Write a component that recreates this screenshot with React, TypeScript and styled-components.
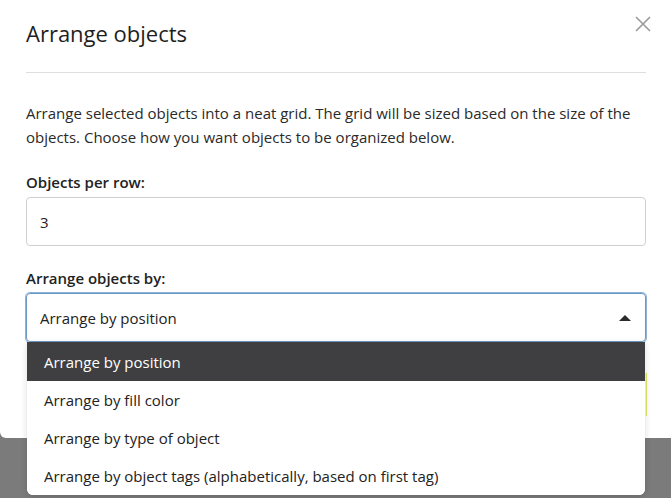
import React from 'react'
import styled, { createGlobalStyle } from 'styled-components'

const Global = createGlobalStyle`
    html, body {
        margin: 0;
        padding: 0;
        background: #7b7b7b;
    }
    body {
        font-family: "Open Sans", "Liberation Sans", sans-serif;
        color: #212529;
    }
`

const Page = styled.div`
    width: 671px;
    height: 498px;
    overflow: hidden;
    background: #7b7b7b;
`

const Modal = styled.div`
    position: relative;
    width: 700px;
    background: #fff;
    border-radius: 0 0 6px 6px;
    padding: 0 0 0 26px;
    box-sizing: border-box;
`

const Inner = styled.div`
    width: 620px;
`

const Header = styled.div`
    display: flex;
    justify-content: space-between;
    align-items: flex-start;
    height: 72px;
    border-bottom: 1px solid #dedede;
`

const Title = styled.h1`
    margin: 19px 0 0;
    font-size: 22px;
    font-weight: 400;
    line-height: 28px;
    color: #1e1e1e;
`

const Close = styled.button`
    margin: 15px -6px 0 0;
    padding: 0;
    border: none;
    background: none;
    width: 18px;
    height: 18px;
    display: flex;
`

const Body = styled.div`
    padding-top: 28px;
`

const Text = styled.p`
    margin: 0 0 21px;
    font-size: 15px;
    line-height: 24px;
    color: #2a2a2a;
`

const Label = styled.div`
    font-size: 15px;
    font-weight: 600;
    line-height: 24px;
    margin-bottom: 3px;
    color: #222;
`

const Field = styled.div<{ $focus?: boolean }>`
    position: relative;
    height: 49px;
    box-sizing: border-box;
    border: 1px solid ${p => (p.$focus ? '#6a98c4' : '#cfcfcf')};
    ${p => p.$focus && 'box-shadow: 0 0 0 1px #8fb3d6;'}
    border-radius: 4px;
    display: flex;
    align-items: center;
    justify-content: space-between;
    padding: 0 14px 0 13px;
    font-size: 15px;
    color: #222;
    margin-bottom: 20px;
`

const Arrow = styled.span`
    width: 0;
    height: 0;
    border-left: 6px solid transparent;
    border-right: 6px solid transparent;
    border-bottom: 6px solid #2b2b2b;
`

const Footer = styled.div`
    display: flex;
    justify-content: flex-end;
    padding: 11px 0 22px;
`

const Button = styled.div`
    width: 120px;
    height: 43px;
    margin-right: -1px;
    border-right: 1px solid #dfe86a;
    background: #f6f9d6;
`

const Menu = styled.ul`
    position: absolute;
    left: 0;
    right: 0;
    top: 48px;
    margin: 0;
    padding: 0;
    list-style: none;
    background: #fff;
    border-radius: 0 0 6px 6px;
    box-shadow: 0 2px 6px rgba(0, 0, 0, 0.15);
    z-index: 2;
    overflow: hidden;
`

const Option = styled.li<{ $active?: boolean }>`
    height: ${p => (p.$active ? 39 : 38)}px;
    display: flex;
    align-items: center;
    padding-left: 17px;
    font-size: 15px;
    background: ${p => (p.$active ? '#3f3f41' : '#fff')};
    color: ${p => (p.$active ? '#fff' : '#222')};
`

const options = [
    'Arrange by position',
    'Arrange by fill color',
    'Arrange by type of object',
    'Arrange by object tags (alphabetically, based on first tag)'
]

export default () => (
    <Page>
        <Global />
        <Modal>
            <Inner>
                <Header>
                    <Title>Arrange objects</Title>
                    <Close aria-label="Close">
                        <svg width="18" height="18" viewBox="0 0 18 18">
                            <path d="M2 2 L16 16 M16 2 L2 16" stroke="#9a9a9a" strokeWidth="1.6" />
                        </svg>
                    </Close>
                </Header>
                <Body>
                    <Text>
                        Arrange selected objects into a neat grid. The grid will be sized based on the size of the
                        objects. Choose how you want objects to be organized below.
                    </Text>
                    <Label>Objects per row:</Label>
                    <Field>3</Field>
                    <Label>Arrange objects by:</Label>
                    <Field $focus>
                        Arrange by position
                        <Arrow />
                        <Menu>
                            {options.map((o, i) => (
                                <Option key={o} $active={i === 0}>{o}</Option>
                            ))}
                        </Menu>
                    </Field>
                </Body>
                <Footer>
                    <Button />
                </Footer>
            </Inner>
        </Modal>
    </Page>
)
